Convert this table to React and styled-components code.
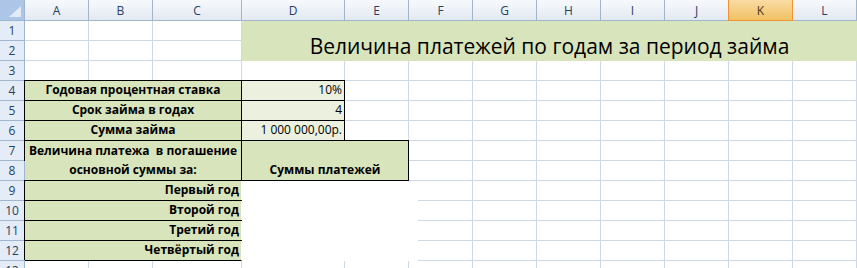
import React from "react";
import styled, { createGlobalStyle, css } from "styled-components";

const GRID = "#d0d7e5";
const HEAD_LINE = "#9eb6ce";
const GREEN = "#d8e4bc";
const PALE = "#ebf1de";

const COLS = ["A", "B", "C", "D", "E", "F", "G", "H", "I", "J", "K", "L"];
const WIDTHS = [64, 64, 89, 103, 64, 64, 64, 64, 64, 64, 64, 64];
const ROW_COUNT = 13;
const ACTIVE_COL = "K";

const GlobalStyle = createGlobalStyle`
  html, body {
    margin: 0;
    padding: 0;
    background: #fff;
  }
  * {
    box-sizing: border-box;
  }
`;

const Sheet = styled.div`
  display: grid;
  grid-template-columns: 25px ${WIDTHS.map((w) => w + "px").join(" ")};
  grid-template-rows: 21px repeat(${ROW_COUNT}, 20px);
  width: 857px;
  height: 268px;
  overflow: hidden;
  font-family: "Open Sans", "Liberation Sans", sans-serif;
  color: #000;
  background: #fff;
`;

const Corner = styled.div`
  background: #adc6e8;
  border-right: 1px solid ${HEAD_LINE};
  border-bottom: 1px solid ${HEAD_LINE};
  display: flex;
  align-items: flex-end;
  justify-content: flex-end;
  padding: 0 3px 3px 0;
`;

const ColHead = styled.div`
  display: flex;
  align-items: center;
  justify-content: center;
  font-size: 12px;
  color: #27415f;
  background: linear-gradient(#f7f9fc, #e3e9f1);
  border-right: 1px solid ${HEAD_LINE};
  border-bottom: 1px solid ${HEAD_LINE};
  ${(p) =>
    p.$active &&
    css`
      background: linear-gradient(#f9dba4, #f2c263);
      border-right-color: #f29436;
      border-bottom-color: #f29436;
      box-shadow: -1px 0 0 #f29436;
      color: #4a3a1a;
    `}
`;

const RowHead = styled.div`
  display: flex;
  align-items: center;
  justify-content: center;
  font-size: 12px;
  color: #27415f;
  background: #e4ecf7;
  border-right: 1px solid ${HEAD_LINE};
  border-bottom: 1px solid ${HEAD_LINE};
`;

const Cell = styled.div`
  grid-column: ${(p) => p.$col + 1} / span ${(p) => p.$cs || 1};
  grid-row: ${(p) => p.$row + 1} / span ${(p) => p.$rs || 1};
  display: flex;
  flex-direction: column;
  justify-content: flex-end;
  align-items: ${(p) =>
    p.$align === "right" ? "flex-end" : p.$align === "center" ? "center" : "flex-start"};
  padding: 0 2px 1px 2px;
  background: ${(p) => p.$fill || "#fff"};
  border-right: 1px solid ${GRID};
  border-bottom: 1px solid ${GRID};
  font-size: 12px;
  font-weight: ${(p) => (p.$bold ? 700 : 400)};
  white-space: pre;
  line-height: 19px;
  ${(p) =>
    p.$boxed &&
    css`
      border-right-color: #000;
      border-bottom-color: #000;
      box-shadow: -1px -1px 0 #000, 0 -1px 0 #000;
    `}
  ${(p) =>
    p.$openRight &&
    css`
      border-right-color: #fff;
    `}
  ${(p) =>
    p.$bare &&
    css`
      border-right: none;
      border-bottom: none;
    `}
  ${(p) =>
    p.$mask &&
    css`
      border-bottom: none;
      background: linear-gradient(${GRID}, ${GRID}) no-repeat right bottom / calc(100% - 9px) 1px, #fff;
    `}
`;

const Title = styled.span`
  font-size: 21px;
  line-height: 26px;
  padding-bottom: 1px;
`;

const Line = styled.span`
  display: block;
  height: 20px;
  line-height: 19px;
`;

const blocks = [
  { r: 1, c: 4, rs: 2, cs: 9, title: "Величина платежей по годам за период займа", fill: GREEN, align: "center", bare: true },
  { r: 4, c: 1, cs: 3, text: "Годовая процентная ставка", fill: GREEN, align: "center", bold: true, boxed: true },
  { r: 4, c: 4, text: "10%", fill: PALE, align: "right", boxed: true },
  { r: 5, c: 1, cs: 3, text: "Срок займа в годах", fill: GREEN, align: "center", bold: true, boxed: true },
  { r: 5, c: 4, text: "4", fill: PALE, align: "right", boxed: true },
  { r: 6, c: 1, cs: 3, text: "Сумма займа", fill: GREEN, align: "center", bold: true, boxed: true },
  { r: 6, c: 4, text: "1 000 000,00р.", fill: PALE, align: "right", boxed: true },
  { r: 7, c: 1, rs: 2, cs: 3, lines: ["Величина платежа  в погашение", "основной суммы за:"], fill: GREEN, align: "center", bold: true, boxed: true },
  { r: 7, c: 4, rs: 2, cs: 2, text: "Суммы платежей", fill: GREEN, align: "center", bold: true, boxed: true },
  { r: 9, c: 1, cs: 3, text: "Первый год", fill: GREEN, align: "right", bold: true, boxed: true, openRight: true },
  { r: 9, c: 4, rs: 4, cs: 2, text: "", bare: true },
  { r: 10, c: 1, cs: 3, text: "Второй год", fill: GREEN, align: "right", bold: true, boxed: true, openRight: true },
  { r: 11, c: 1, cs: 3, text: "Третий год", fill: GREEN, align: "right", bold: true, boxed: true, openRight: true },
  { r: 12, c: 1, cs: 3, text: "Четвёртый год", fill: GREEN, align: "right", bold: true, boxed: true, openRight: true },
];

const masked = (r, c) => c === 6 && r >= 9 && r <= 12;

function buildCells() {
  const taken = {};
  blocks.forEach((b) => {
    for (let r = b.r; r < b.r + (b.rs || 1); r++)
      for (let c = b.c; c < b.c + (b.cs || 1); c++) taken[r + ":" + c] = true;
  });
  const out = [];
  for (let r = 1; r <= ROW_COUNT; r++) {
    out.push(
      <RowHead key={"h" + r} style={{ gridRow: r + 1, gridColumn: 1 }}>
        {r}
      </RowHead>
    );
    blocks
      .filter((b) => b.r === r)
      .forEach((b, i) =>
        out.push(
          <Cell
            key={"b" + r + "-" + i}
            $row={b.r}
            $col={b.c}
            $rs={b.rs}
            $cs={b.cs}
            $fill={b.fill}
            $align={b.align}
            $bold={b.bold}
            $boxed={b.boxed}
            $openRight={b.openRight}
            $bare={b.bare}
          >
            {b.title && <Title>{b.title}</Title>}
            {b.lines && b.lines.map((l) => <Line key={l}>{l}</Line>)}
            {b.text}
          </Cell>
        )
      );
    for (let c = 1; c <= COLS.length; c++) {
      if (taken[r + ":" + c]) continue;
      out.push(<Cell key={r + ":" + c} $row={r} $col={c} $mask={masked(r, c)} />);
    }
  }
  return out;
}

export default function App() {
  return (
    <>
      <GlobalStyle />
      <Sheet>
        <Corner>
          <svg width="12" height="11" viewBox="0 0 12 11">
            <polygon points="12,0 12,11 0,11" fill="#e2eaf5" />
          </svg>
        </Corner>
        {COLS.map((l) => (
          <ColHead key={l} $active={l === ACTIVE_COL}>
            {l}
          </ColHead>
        ))}
        {buildCells()}
      </Sheet>
    </>
  );
}
